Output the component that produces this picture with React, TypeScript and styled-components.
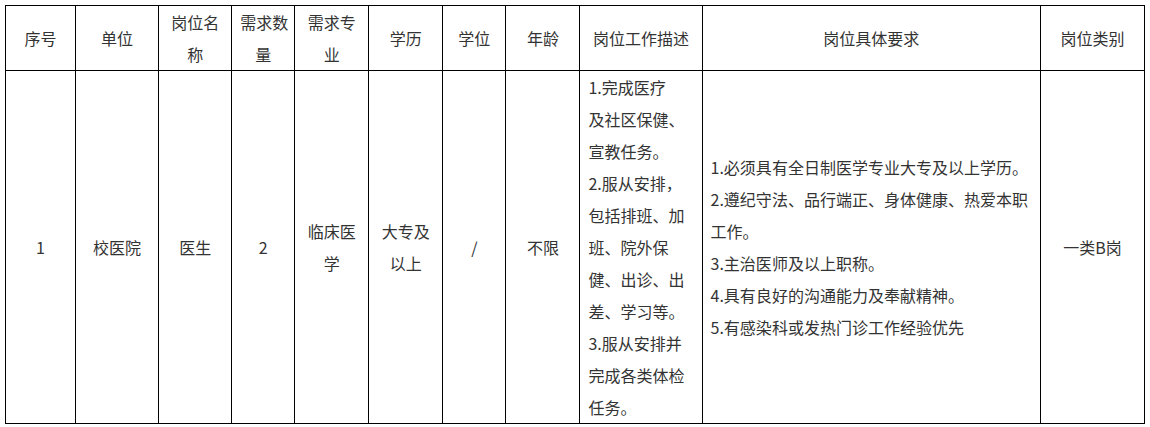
import styled, { createGlobalStyle } from "styled-components";

const GlobalStyle = createGlobalStyle`
  body {
    margin: 0;
    background: #fff;
    font-family: "Microsoft YaHei", "Noto Sans CJK SC", sans-serif;
  }
`;

const Page = styled.div`
  padding: 5px 0 0 5px;
`;

const Table = styled.table`
  border-collapse: collapse;
  table-layout: fixed;
  width: 1140px;
  color: #333;
  font-size: 16px;
  line-height: 32px;
`;

const Cell = styled.td<{ $align?: "left" | "center" }>`
  border: 1px solid #000;
  padding: 0 8px;
  text-align: ${(p) => p.$align || "center"};
  vertical-align: middle;
  white-space: nowrap;
`;

const HeadRow = styled.tr`
  height: 65px;
`;

const BodyRow = styled.tr`
  height: 353px;
`;

const Line = styled.div`
  white-space: nowrap;
`;

const widths = [70, 83, 73, 63, 74, 74, 63, 74, 122, 338, 104];

const headers = [
  ["序号"],
  ["单位"],
  ["岗位名", "称"],
  ["需求数", "量"],
  ["需求专", "业"],
  ["学历"],
  ["学位"],
  ["年龄"],
  ["岗位工作描述"],
  ["岗位具体要求"],
  ["岗位类别"],
];

const duties = [
  "1.完成医疗",
  "及社区保健、",
  "宣教任务。",
  "2.服从安排，",
  "包括排班、加",
  "班、院外保",
  "健、出诊、出",
  "差、学习等。",
  "3.服从安排并",
  "完成各类体检",
  "任务。",
];

const requirements = [
  "1.必须具有全日制医学专业大专及以上学历。",
  "2.遵纪守法、品行端正、身体健康、热爱本职",
  "工作。",
  "3.主治医师及以上职称。",
  "4.具有良好的沟通能力及奉献精神。",
  "5.有感染科或发热门诊工作经验优先",
];

const Lines = ({ items }: { items: string[] }) => (
  <>
    {items.map((t, i) => (
      <Line key={i}>{t}</Line>
    ))}
  </>
);

const App = () => {
  return (
    <Page>
      <GlobalStyle />
      <Table>
        <colgroup>
          {widths.map((w, i) => (
            <col key={i} style={{ width: w }} />
          ))}
        </colgroup>
        <tbody>
          <HeadRow>
            {headers.map((h, i) => (
              <Cell key={i}>
                <Lines items={h} />
              </Cell>
            ))}
          </HeadRow>
          <BodyRow>
            <Cell>1</Cell>
            <Cell>校医院</Cell>
            <Cell>医生</Cell>
            <Cell>2</Cell>
            <Cell>
              <Lines items={["临床医", "学"]} />
            </Cell>
            <Cell>
              <Lines items={["大专及", "以上"]} />
            </Cell>
            <Cell>/</Cell>
            <Cell>不限</Cell>
            <Cell $align="left">
              <Lines items={duties} />
            </Cell>
            <Cell $align="left">
              <Lines items={requirements} />
            </Cell>
            <Cell>一类B岗</Cell>
          </BodyRow>
        </tbody>
      </Table>
    </Page>
  );
};

export default App;
